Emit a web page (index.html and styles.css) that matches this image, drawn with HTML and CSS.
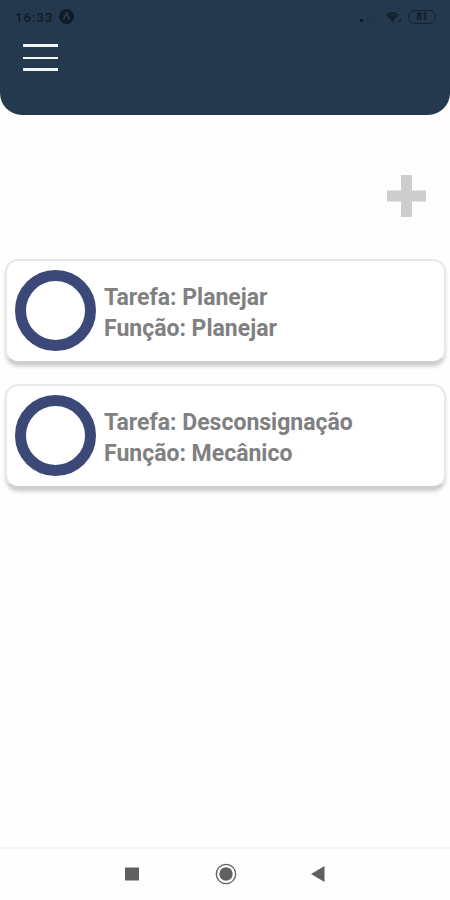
FILE: index.html
```
<!DOCTYPE html>
<html lang="pt-BR">
<head>
<meta charset="UTF-8">
<meta name="viewport" content="width=device-width, initial-scale=1.0">
<title>Tarefas</title>
<link rel="stylesheet" href="styles.css">
</head>
<body>
    <header class="header">
        <div class="status-bar">
            <span class="clock">16:33</span>
            <svg class="app-icon" width="15" height="15" viewBox="0 0 15 15">
                <circle cx="7.5" cy="7.5" r="7.5" fill="#101b27"/>
                <path d="M4.3 10.8 7.5 4l3.2 6.8" fill="none" stroke="#2b4258" stroke-width="1.5"/>
            </svg>
            <svg class="signal" width="17" height="12" viewBox="0 0 17 12">
                <path d="M0 8h3v3H0z" fill="#101b27"/>
                <path d="M7 7h2v4H7zM11 4h1.5v7H11zM14.5 2H16v9h-1.5z" fill="#203448"/>
            </svg>
            <svg class="wifi" width="16" height="12" viewBox="0 0 16 12">
                <path d="M0 3.5Q6.5-1.5 13 3.5L6.5 11z" fill="#14212e"/>
                <path d="M1.5 5Q6.5 1.5 11.5 5" fill="none" stroke="#243a50" stroke-width=".7"/>
                <path d="M12 11l3-3v3z" fill="#14212e"/>
            </svg>
            <span class="battery">81</span>
        </div>
        <button class="menu" aria-label="Menu">
            <span></span>
            <span></span>
            <span></span>
        </button>
    </header>

    <main class="content">
        <button class="add" aria-label="Adicionar">
            <svg width="39" height="42" viewBox="0 0 39 42">
                <path d="M14 0h11v15.5h14v11H25V42H14V26.500H0v-11h14z" fill="#cdcdcd"/>
            </svg>
        </button>

        <div class="card">
            <div class="ring"></div>
            <div class="info">
                <p>Tarefa: Planejar</p>
                <p>Função: Planejar</p>
            </div>
        </div>
        <div class="card">
            <div class="ring"></div>
            <div class="info">
                <p>Tarefa: Desconsignação</p>
                <p>Função: Mecânico</p>
            </div>
        </div>
    </main>

    <!-- Android navigation -->
    <nav class="nav-bar">
        <svg width="14" height="14" viewBox="0 0 14 14">
            <path d="M0 .5h14v13H0z" fill="#606060"/>
        </svg>
        <svg width="22" height="22" viewBox="0 0 22 22">
            <circle cx="11" cy="11" r="9.7" fill="none" stroke="#606060" stroke-width="1.3"/>
            <circle cx="11" cy="11" r="6.7" fill="#606060"/>
        </svg>
        <svg width="14" height="16" viewBox="0 0 14 16">
            <path d="M13.5 0v16L0 8z" fill="#606060"/>
        </svg>
    </nav>
</body>
</html>
```
FILE: styles.css
```
* {
    box-sizing: border-box;
}
body {
    display: flex;
    flex-direction: column;
    height: 900px;
    margin: 0;
    font-family: Roboto, sans-serif;
    background-color: #fefefe;
}
button {
    padding: 0;
    border: none;
    background: none;
    cursor: pointer;
}
.header {
    height: 115px;
    background-color: #24394e;
    border-radius: 0 0 22px 22px;
}
.status-bar {
    display: flex;
    align-items: center;
    height: 33px;
    padding: 0 14px 0 15px;
    color: #101b27;
}
.clock {
    width: 38px;
    font-size: 13.5px;
    font-weight: 500;
    letter-spacing: 0.8px;
}
.app-icon {
    margin-left: 6px;
}
.signal {
    margin-left: auto;
}
.wifi {
    margin: 0 6px 0 9px;
}
.battery {
    width: 28px;
    height: 14px;
    border: 1.5px solid #14212e;
    border-radius: 7px;
    font-size: 10px;
    font-weight: bold;
    line-height: 12px;
    text-align: center;
}
.menu {
    display: flex;
    flex-direction: column;
    justify-content: space-between;
    width: 35px;
    height: 27px;
    margin: 11px 0 0 23px;
}
.menu span {
    width: 100%;
    height: 3px;
    background-color: #f1f6f8;
}
.menu span:nth-child(2) {
    height: 2px;
}
.content {
    display: flex;
    flex: 1;
    flex-direction: column;
    gap: 21px;
    padding: 60px 4px 0 5px;
}
.add {
    align-self: flex-end;
    height: 42px;
    margin: 0 20px 21px 0;
}
.add svg {
    display: block;
}
.card {
    display: flex;
    align-items: flex-start;
    height: 104px;
    padding: 9px 8px 0;
    background-color: #fff;
    border: 2px solid #e8e8e8;
    border-bottom-color: #d0d0d0;
    border-radius: 13px;
    box-shadow: 0 4px 4px -1px rgba(0, 0, 0, 0.22);
}
.ring {
    width: 81px;
    height: 81px;
    border: 11.5px solid #3b4878;
    border-radius: 50%;
}
.info {
    margin: 12px 0 0 8px;
    color: #808080;
    font-size: 23px;
    font-weight: bold;
    line-height: 31px;
}
.info p {
    margin: 0;
}
.nav-bar {
    display: flex;
    align-items: center;
    height: 53px;
    padding: 0 0 1px 125px;
    border-top: 2px solid #f5f5f5;
}
.nav-bar svg:nth-child(2) {
    margin: 0 74px 0 76px;
}
```
